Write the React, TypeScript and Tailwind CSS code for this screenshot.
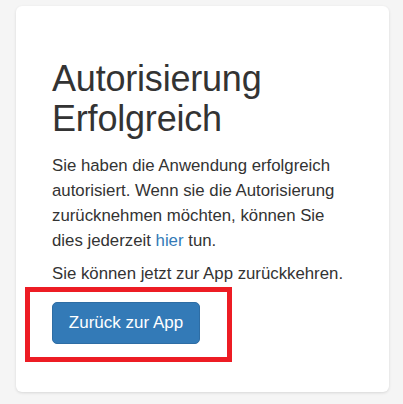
import React from "react";

export default function App() {
  return (
    <div
      className="min-h-[404px] w-full bg-[#f5f5f5] pt-[6px] pl-[16px] pr-[14px] pb-[13px] text-[#333]"
      style={{ fontFamily: '"Liberation Sans", Arial, sans-serif' }}
    >
      <div className="rounded-[6px] bg-white shadow-[0_1px_3px_rgba(0,0,0,0.12)] pl-[36px] pr-[42px] pt-[53px] pb-[48px]">
        <h1 className="text-[36px] leading-[40px] font-normal tracking-[-0.2px] text-[#333]">
          Autorisierung
          <br />
          Erfolgreich
        </h1>
        <p className="mt-[14px] text-[16.8px] leading-[25px]">
          Sie haben die Anwendung erfolgreich autorisiert. Wenn sie die
          Autorisierung zurücknehmen möchten, können Sie dies jederzeit{" "}
          <a href="#" className="text-[#337ab7]">
            hier
          </a>{" "}
          tun.
        </p>
        <p className="mt-[8px] whitespace-nowrap text-[16.8px] leading-[25px]">
          Sie können jetzt zur App zurückkehren.
        </p>
        <div className="relative mt-[16px] w-[148px]">
          <button className="flex h-[42px] w-[148px] items-center justify-center rounded-[5px] border border-[#2e6da4] bg-[#337ab7] text-[17px] text-white">
            Zurück zur App
          </button>
          <div className="pointer-events-none absolute -top-[15px] -left-[27px] -right-[32px] -bottom-[18px] border-[5px] border-[#ed1c24]" />
        </div>
      </div>
    </div>
  );
}
